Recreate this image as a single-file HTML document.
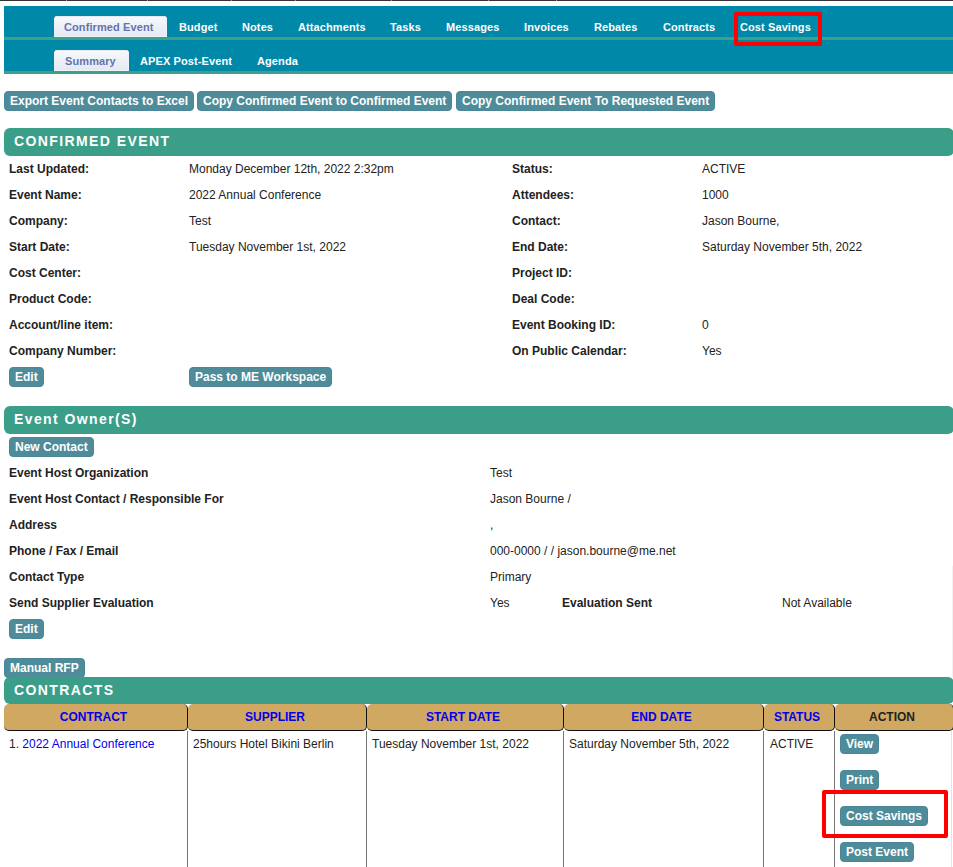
<!DOCTYPE html>
<html><head><meta charset="utf-8">
<style>
html,body{margin:0;padding:0;background:#fff;width:953px;height:867px;overflow:hidden;position:relative;font-family:"Liberation Sans",sans-serif;font-size:12px;color:#222}
.a{position:absolute;white-space:nowrap;line-height:14px}
.b{font-weight:bold}
#topline{position:absolute;left:0;top:0;width:953px;height:1px;background:#333}
.nav{position:absolute;left:4px;width:949px;background:#0088a8}
.gl{position:absolute;left:4px;width:949px;height:3px;background:#3fa08a}
.tab{position:absolute;background:linear-gradient(#f7f9fc,#e3e8f1);clip-path:polygon(0 2px,2px 0,calc(100% - 2px) 0,100% 2px,100% 100%,0 100%);box-shadow:inset -1px -1px 0 #eff1f8,inset 0 1px 0 #e4e9f2;color:#6373b0;font-weight:bold;font-size:11px;line-height:23px;box-sizing:border-box;letter-spacing:0.1px}
.nt{position:absolute;color:#fff;font-weight:bold;font-size:11px;line-height:14px;white-space:nowrap;letter-spacing:0.1px}
.btn{position:absolute;background:#4e8c9a;border:1px solid #4a8598;border-radius:4px;color:#fff;font-weight:bold;font-size:12px;line-height:18px;height:18px;padding:0 5px;white-space:nowrap}
.hdr{position:absolute;left:4px;width:950px;background:#3b9e88;border-radius:6px;color:#fff;font-weight:bold;font-size:14px;letter-spacing:1.4px}
.hdr span{position:absolute;left:10px;white-space:nowrap;line-height:16px}
.red{position:absolute;border:4px solid #f00;border-radius:2px;box-sizing:border-box}
.th{position:absolute;top:704px;height:26px;background:#d0a862;border-right:1px solid #111;border-bottom:1px solid #111;border-radius:5px;box-sizing:content-box;text-align:center;font-weight:bold;font-size:12px;line-height:26px;color:#0000f0}
.vl{position:absolute;top:731px;width:1px;height:136px;background:#777}
</style></head><body>
<div id="topline"></div><div style="position:absolute;left:66px;top:0;width:1px;height:1px;background:#9a9aae"></div><div style="position:absolute;left:147px;top:0;width:1px;height:1px;background:#9a9aae"></div><div style="position:absolute;left:231px;top:0;width:1px;height:1px;background:#9a9aae"></div><div style="position:absolute;left:295px;top:0;width:1px;height:1px;background:#9a9aae"></div><div style="position:absolute;left:391px;top:0;width:1px;height:1px;background:#9a9aae"></div><div style="position:absolute;left:488px;top:0;width:1px;height:1px;background:#9a9aae"></div><div style="position:absolute;left:556px;top:0;width:1px;height:1px;background:#9a9aae"></div>
<div style="position:absolute;left:951px;top:731px;width:1px;height:136px;background:#e4e4e4"></div><div style="position:absolute;left:952px;top:566px;width:1px;height:111px;background:#f2f2f2"></div>

<!-- NAV -->
<div class="nav" style="top:6px;height:31px"></div>
<div class="gl" style="top:37px"></div>
<div class="nav" style="top:40px;height:31px"></div>
<div class="gl" style="top:71px"></div>

<div class="tab" style="left:54px;top:16px;width:113px;height:21px;padding-left:10px">Confirmed Event</div>
<div class="nt" style="left:179px;top:20px">Budget</div>
<div class="nt" style="left:242px;top:20px">Notes</div>
<div class="nt" style="left:298px;top:20px">Attachments</div>
<div class="nt" style="left:390px;top:20px">Tasks</div>
<div class="nt" style="left:446px;top:20px">Messages</div>
<div class="nt" style="left:524px;top:20px">Invoices</div>
<div class="nt" style="left:594px;top:20px">Rebates</div>
<div class="nt" style="left:663px;top:20px">Contracts</div>
<div class="nt" style="left:740px;top:20px">Cost Savings</div>
<div class="red" style="left:734px;top:12px;width:88px;height:34px"></div>

<div class="tab" style="left:54px;top:50px;width:75px;height:21px;padding-left:11px">Summary</div>
<div class="nt" style="left:140px;top:54px">APEX Post-Event</div>
<div class="nt" style="left:257px;top:54px">Agenda</div>

<!-- buttons -->
<div class="btn" style="left:4px;top:91px">Export Event Contacts to Excel</div>
<div class="btn" style="left:197px;top:91px">Copy Confirmed Event to Confirmed Event</div>
<div class="btn" style="left:456px;top:91px">Copy Confirmed Event To Requested Event</div>

<!-- CONFIRMED EVENT -->
<div class="hdr" style="top:128px;height:28px"><span style="top:5px">CONFIRMED EVENT</span></div>

<!-- rows -->
<div class="a b" style="left:9px;top:162px">Last Updated:</div><div class="a" style="left:189px;top:162px">Monday December 12th, 2022 2:32pm</div><div class="a b" style="left:512px;top:162px">Status:</div><div class="a" style="left:702px;top:162px">ACTIVE</div>
<div class="a b" style="left:9px;top:188px">Event Name:</div><div class="a" style="left:189px;top:188px">2022 Annual Conference</div><div class="a b" style="left:512px;top:188px">Attendees:</div><div class="a" style="left:702px;top:188px">1000</div>
<div class="a b" style="left:9px;top:214px">Company:</div><div class="a" style="left:189px;top:214px">Test</div><div class="a b" style="left:512px;top:214px">Contact:</div><div class="a" style="left:702px;top:214px">Jason Bourne,</div>
<div class="a b" style="left:9px;top:240px">Start Date:</div><div class="a" style="left:189px;top:240px">Tuesday November 1st, 2022</div><div class="a b" style="left:512px;top:240px">End Date:</div><div class="a" style="left:702px;top:240px">Saturday November 5th, 2022</div>
<div class="a b" style="left:9px;top:266px">Cost Center:</div><div class="a b" style="left:512px;top:266px">Project ID:</div>
<div class="a b" style="left:9px;top:292px">Product Code:</div><div class="a b" style="left:512px;top:292px">Deal Code:</div>
<div class="a b" style="left:9px;top:318px">Account/line item:</div><div class="a b" style="left:512px;top:318px">Event Booking ID:</div><div class="a" style="left:702px;top:318px">0</div>
<div class="a b" style="left:9px;top:344px">Company Number:</div><div class="a b" style="left:512px;top:344px">On Public Calendar:</div><div class="a" style="left:702px;top:344px">Yes</div>
<div class="btn" style="left:9px;top:367px">Edit</div>
<div class="btn" style="left:189px;top:367px">Pass to ME Workspace</div>

<!-- EVENT OWNER -->
<div class="hdr" style="top:406px;height:28px"><span style="top:5px">Event Owner(S)</span></div>
<div class="btn" style="left:9px;top:437px">New Contact</div>
<div class="a b" style="left:9px;top:466px">Event Host Organization</div><div class="a" style="left:490px;top:466px">Test</div>
<div class="a b" style="left:9px;top:492px">Event Host Contact / Responsible For</div><div class="a" style="left:490px;top:492px">Jason Bourne /</div>
<div class="a b" style="left:9px;top:518px">Address</div><div class="a" style="left:490px;top:518px">,</div>
<div class="a b" style="left:9px;top:544px">Phone / Fax / Email</div><div class="a" style="left:490px;top:544px">000-0000 / / jason.bourne@me.net</div>
<div class="a b" style="left:9px;top:570px">Contact Type</div><div class="a" style="left:490px;top:570px">Primary</div>
<div class="a b" style="left:9px;top:596px">Send Supplier Evaluation</div><div class="a" style="left:490px;top:596px">Yes</div>
<div class="a b" style="left:562px;top:596px">Evaluation Sent</div><div class="a" style="left:782px;top:596px">Not Available</div>
<div class="btn" style="left:9px;top:619px">Edit</div>

<!-- CONTRACTS -->
<div class="btn" style="left:4px;top:658px">Manual RFP</div>
<div class="hdr" style="top:677px;height:27px"><span style="top:5px">CONTRACTS</span></div>
<div class="th" style="left:4px;width:179px;padding-right:4px">CONTRACT</div>
<div class="th" style="left:188px;width:174px;padding-right:4px">SUPPLIER</div>
<div class="th" style="left:367px;width:192px;padding-right:4px">START DATE</div>
<div class="th" style="left:564px;width:195px;padding-right:4px">END DATE</div>
<div class="th" style="left:764px;width:66px;padding-right:4px">STATUS</div>
<div class="th" style="left:835px;width:114px;padding-right:4px;color:#222">ACTION</div>
<div class="vl" style="left:187px"></div>
<div class="vl" style="left:366px"></div>
<div class="vl" style="left:563px"></div>
<div class="vl" style="left:763px"></div>
<div class="vl" style="left:834px"></div>
<div class="a" style="left:9px;top:737px">1. <span style="color:#0000f0">2022 Annual Conference</span></div>
<div class="a" style="left:193px;top:737px">25hours Hotel Bikini Berlin</div>
<div class="a" style="left:372px;top:737px">Tuesday November 1st, 2022</div>
<div class="a" style="left:569px;top:737px">Saturday November 5th, 2022</div>
<div class="a" style="left:770px;top:737px">ACTIVE</div>
<div class="btn" style="left:840px;top:734px">View</div>
<div class="btn" style="left:840px;top:770px">Print</div>
<div class="btn" style="left:840px;top:806px">Cost Savings</div>
<div class="btn" style="left:840px;top:842px">Post Event</div>
<div class="red" style="left:822px;top:790px;width:126px;height:48px"></div>
</body></html>
